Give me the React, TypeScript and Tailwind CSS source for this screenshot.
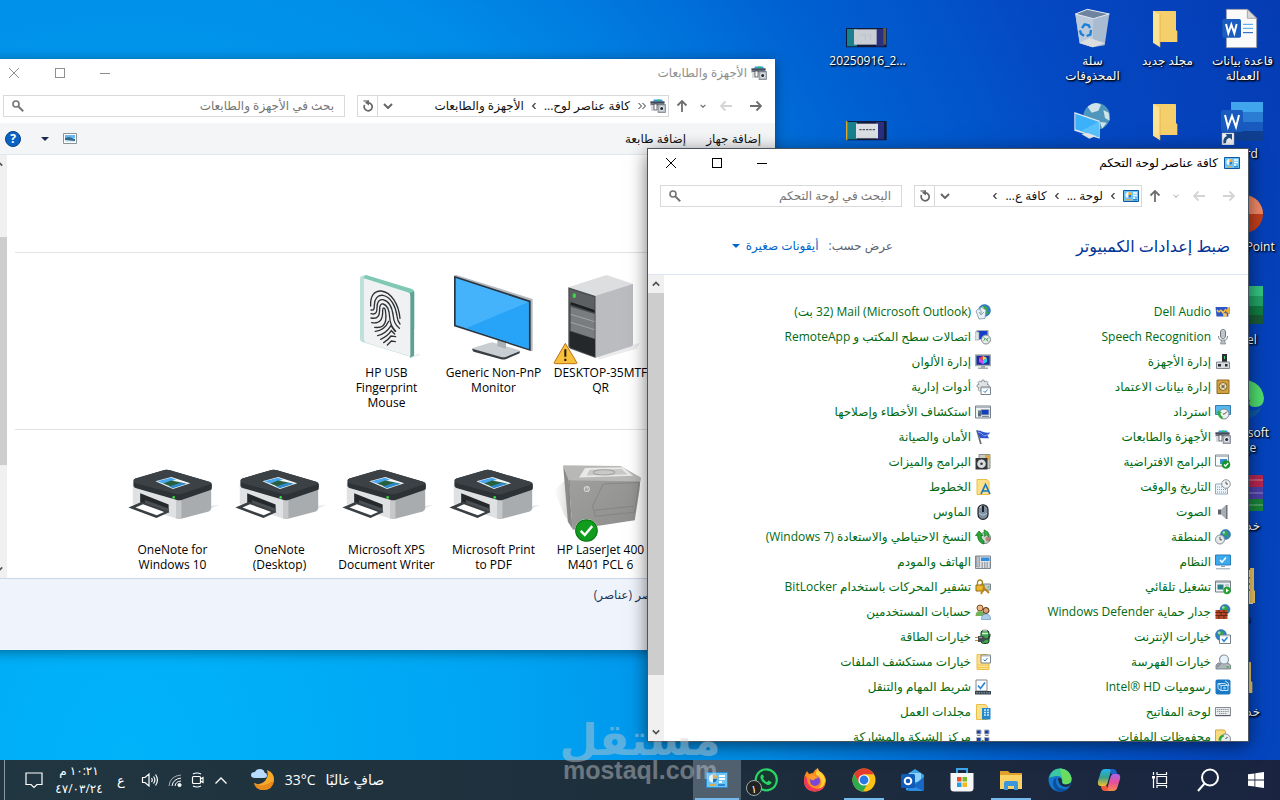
import type { ReactNode } from "react";

/* ---------- 16px item icons ---------- */

const Globe = ({ x = 8, y = 8, r = 5 }: { x?: number; y?: number; r?: number }) => (
  <g>
    <circle cx={x} cy={y} r={r} fill="#2f7fc4" stroke="#1f5c9c" strokeWidth=".5" />
    <path d={`M${x - r * 0.6} ${y - r * 0.5}q${r * 0.6} ${-r * 0.5} ${r} 0t${-r * 0.3} ${r * 0.7}t${-r * 0.7} ${-r * 0.7}`} fill="#35a845" />
    <path d={`M${x + r * 0.2} ${y + r * 0.2}h${r * 0.6}l${-r * 0.4} ${r * 0.6}z`} fill="#35a845" />
    <circle cx={x - r * 0.35} cy={y - r * 0.4} r={r * 0.25} fill="#d8efff" opacity=".7" />
  </g>
);

const small: Record<string, ReactNode> = {
  panel: (
    <>
      <path d="M.5 2.500h15v11H.5z" fill="#6cc5f4" stroke="#0c56a8" />
      <circle cx="5.500" cy="7" r="3" fill="#eaf7ff" />
      <path d="M5.500 7V4a3 3 0 0 1 3 3z" fill="#f7a31b" />
      <path d="M5.500 7H8.500A3 3 0 0 1 5.500 10z" fill="#2b7fd0" />
      <path d="M10 5h4M10 7.500h4M10 10h2" stroke="#fff" strokeWidth="1.300" />
      <path d="M3 11.800h5" stroke="#f7a31b" />
      <path d="M10 11.800h4" stroke="#1a6cb8" />
    </>
  ),
  devices: (
    <>
      <path d="M4 1.500h8l1 2H3z" fill="#2d9be8" />
      <path d="M7 1.500h2.500v2H7z" fill="#22c55e" />
      <path d="M.5 3.500h14v4H.5z" fill="#6b7280" />
      <path d="M.5 3.500h14v1.300H.5z" fill="#374151" />
      <path d="M1 7h3v6H1z" fill="#d7dade" />
      <path d="M4 6h3v6H4z" fill="#fff" stroke="#333" strokeWidth=".7" />
      <path d="M8 6.500h7.500v8H8z" fill="#b9bdc2" stroke="#6b7280" strokeWidth=".7" />
      <circle cx="11.700" cy="10.500" r="2.500" fill="#e5e7eb" />
      <circle cx="11.700" cy="10.500" r="1.500" fill="#1f2937" />
    </>
  ),
  audio: (
    <>
      <path d="M.5 3h12l1 9.500H1.500z" fill="#2e55c5" />
      <path d="M2 6q2 3 3 1t3 2l3-4" stroke="#f0c24b" strokeWidth="1.600" fill="none" />
      <path d="M11 6l3.500-3v7l-3.500-2z" fill="#f2b63c" stroke="#b97a17" strokeWidth=".5" />
      <circle cx="10" cy="11" r="2" fill="#f2c860" />
    </>
  ),
  mic: (
    <>
      <rect x="5.500" y=".5" width="5" height="9" rx="2.500" fill="#e2e5e9" stroke="#6f7780" />
      <path d="M6 3h4M6 5h4M6 7h4" stroke="#8b939c" strokeWidth=".8" />
      <path d="M3.500 7q0 4.500 4.500 4.500T12.500 7" fill="none" stroke="#7a828b" />
      <path d="M6.500 11h3l1 4h-5z" fill="#b6bcc3" stroke="#6f7780" strokeWidth=".6" />
    </>
  ),
  device: (
    <>
      <path d="M7 0h5v8H7z" fill="#2c3036" />
      <path d="M9 2h1v3H9z" fill="#46d160" />
      <path d="M1.500 8h13v6.500h-13z" fill="#d7dade" stroke="#83898f" />
      <path d="M3 10h3v2.500H3zM10 10h2.500v2.500H10z" fill="#2c3036" />
    </>
  ),
  vault: (
    <>
      <path d="M2 1h12v13.500H2z" fill="#d3a240" stroke="#8e6a1e" />
      <circle cx="8" cy="7.500" r="4" fill="#efe0b4" stroke="#846832" />
      <circle cx="8" cy="7.500" r="1.500" fill="#6b7077" />
      <path d="M5 4.500l6 6m0-6l-6 6" stroke="#846832" strokeWidth=".7" />
    </>
  ),
  recovery: (
    <>
      <path d="M.5 1.500h15v9H.5z" fill="#55b6ee" stroke="#347fae" />
      <circle cx="9" cy="10" r="5" fill="#eef1f2" stroke="#7d868c" />
      <path d="M1 9l3-2.500L7 9H5.500a4 4 0 0 0 2.500 4l-1 2A6 6 0 0 1 3 9z" fill="#2fab3b" />
      <path d="M9.500 10l2.500-2.500M9.500 10H8" stroke="#333" strokeWidth=".9" />
    </>
  ),
  defaults: (
    <>
      <path d="M.5 1h13v11H.5z" fill="#f8fafc" stroke="#7e8892" />
      <path d="M1 1.500h12v1.500H1z" fill="#b6bec6" />
      <path d="M5 5h7v5H5z" fill="#3a8fd8" />
      <circle cx="11" cy="10.500" r="4.300" fill="#14952b" />
      <path d="M9 10.500l1.500 1.700 2.700-3.200" stroke="#fff" strokeWidth="1.400" fill="none" />
    </>
  ),
  date: (
    <>
      <path d="M.5 5h12v10H.5z" fill="#eef6fc" stroke="#93a7b7" />
      <path d="M2 8h8M2 10.500h9M2 13h9" stroke="#5ba0da" strokeWidth="1.200" strokeDasharray="1 1" />
      <circle cx="11" cy="5" r="4.300" fill="#f1f3f4" stroke="#8b949c" />
      <path d="M11 2.500V5h2" stroke="#444" fill="none" strokeWidth=".9" />
    </>
  ),
  sound: (
    <>
      <path d="M3 5.500h3v5H3z" fill="#5b6168" />
      <path d="M6 5.500L11 1v14l-5-4.500z" fill="#a8adb3" />
      <path d="M11 1h1.500v14H11z" fill="#6d7379" />
    </>
  ),
  region: (
    <>
      <Globe x={10.5} y={5.5} r={5} />
      <circle cx="5" cy="10.500" r="4.500" fill="#e6e9ec" stroke="#858e96" />
      <path d="M5 7.800v3h2" stroke="#444" fill="none" strokeWidth=".9" />
    </>
  ),
  system: (
    <>
      <path d="M.5 1h15v10H.5z" fill="#3aa9ee" stroke="#2a7fb8" />
      <path d="M5 6l2 2.200L11 3.500" stroke="#fff" strokeWidth="1.500" fill="none" />
      <path d="M6 12.500h4M1 14.800h14" stroke="#8aa0b0" />
    </>
  ),
  autoplay: (
    <>
      <path d="M.5 2h15v11H.5z" fill="#eef1f3" stroke="#747e87" />
      <path d="M1 3h14" stroke="#9aa4ad" strokeWidth="1.500" />
      <path d="M2.500 5.500h6v5h-6z" fill="#2c7f86" />
      <path d="M10 6h4M10 8h4" stroke="#9aa4ad" />
      <circle cx="12" cy="11.500" r="3.700" fill="#22a52c" />
      <path d="M11 9.500l3 2-3 2z" fill="#fff" />
    </>
  ),
  firewall: (
    <>
      <Globe x={10} y={5.5} r={5} />
      <path d="M.5 6h12v9H.5z" fill="#b4492a" />
      <path d="M.5 8.500h12M.5 11.500h12M4 6v2.500M9 6v2.500M6 8.500v3M11 8.500v3M4 11.500V15M9 11.500V15" stroke="#5c1f10" strokeWidth=".8" />
    </>
  ),
  internet: (
    <>
      <Globe x={6} y={6} r={5.5} />
      <path d="M4.500 6h11v8.500h-11z" fill="#fff" stroke="#77818a" />
      <path d="M5 6.800h10" stroke="#b0b8bf" />
      <path d="M7 10l2 2.300 3.500-4" stroke="#2684d8" strokeWidth="1.500" fill="none" />
    </>
  ),
  indexing: (
    <>
      <path d="M1 11l2-2h10l2.500 2v4H1z" fill="#aeb4ba" stroke="#6f777e" strokeWidth=".8" />
      <path d="M11.500 13h2.500" stroke="#29a839" strokeWidth="1.200" />
      <circle cx="9" cy="5.500" r="4.500" fill="#e7f3fb" stroke="#8b949c" strokeWidth="1.200" />
      <path d="M6 9l-4 4" stroke="#8b949c" strokeWidth="2" />
    </>
  ),
  intel: (
    <>
      <rect x=".5" y=".5" width="15" height="15" rx="2" fill="#1b78c4" />
      <path d="M3 4.500h7l3 2v5H6l-3-2zM3 4.500l3 2v5M6 6.500h7" stroke="#bfe3fb" fill="none" />
      <circle cx="9.500" cy="9" r="1.500" fill="#7ac6f4" />
      <path d="M10 2q4 1 4 5" stroke="#fff" strokeWidth=".8" fill="none" />
    </>
  ),
  keyboard: (
    <>
      <path d="M.5 3.500h15v8H.5z" fill="#e9ebed" stroke="#858c93" />
      <path d="M2 5.500h12M2 7.500h12M4 9.500h8" stroke="#8b9299" strokeDasharray="1.200 .7" />
      <path d="M.5 11.700h15" stroke="#4d5359" />
    </>
  ),
  history: (
    <>
      <path d="M.5 1h9l1 1.500V15H.5z" fill="#fbdc7c" stroke="#d4a93a" />
      <circle cx="10.500" cy="10" r="5" fill="#e9eced" stroke="#858e96" />
      <path d="M3.500 11.500a6 6 0 0 1 5-6l.7 2A4.500 4.500 0 0 0 6 11.500z" fill="#2fab3b" />
      <path d="M10.500 10l2-2" stroke="#333" />
    </>
  ),
  mail: (
    <>
      <Globe x={9.5} y={6.5} r={6} />
      <path d="M1 7l5-4 5 3-1 8.500-6 .5z" fill="#e9f1f6" stroke="#7b94a6" strokeWidth=".8" />
      <path d="M6 6v5M4 8l2 3 3-3" stroke="#8aa3b5" fill="none" />
      <path d="M4 5h2" stroke="#3c78b8" />
    </>
  ),
  remote: (
    <>
      <path d="M2 1.500h11v9H2z" fill="#1440c8" stroke="#a9b0b7" strokeWidth="1.200" />
      <path d="M0 3h4v8H0z" fill="#dfe3e7" stroke="#8b939b" strokeWidth=".6" />
      <circle cx="11" cy="10.500" r="4.500" fill="#e9eced" stroke="#80888f" />
      <path d="M8.500 11.500l2-1.500-1.500-1.500M13.500 9l-2 1.500 1.500 2" stroke="#21962f" fill="none" />
    </>
  ),
  color: (
    <>
      <path d="M.8 1h14.500v10.500H.8z" fill="#1930a0" stroke="#a3a9af" strokeWidth="1.300" />
      <path d="M8 2l4 2-4 2.500z" fill="#fde047" />
      <path d="M8 2L4 4l4 2.500z" fill="#ef4444" />
      <path d="M4 4v4l4 2V6.500z" fill="#d946ef" />
      <path d="M12 4v4l-4 2V6.500z" fill="#22d3ee" />
      <path d="M6 12h4v1.500h3V15H3v-1.500h3z" fill="#a3a9af" />
    </>
  ),
  admin: (
    <>
      <path d="M7 1h2l.5 2 2-1 1.500 1.500-1 1.800 2 .7v2l-2 .6 1 2-1.500 1.400-2-1L9 13H7l-.5-2-2 1L3 10.600l1-2L2 8V6l2-.7-1-1.800L4.500 2l2 1z" fill="#e0e3e6" stroke="#858c93" strokeWidth=".8" />
      <path d="M6 8h9.500v7.500H6z" fill="#fff" stroke="#77818a" />
      <path d="M6 8.800h9.500" stroke="#9da5ad" />
      <path d="M8.500 12l1.500 1.500 2.500-3" stroke="#2684d8" fill="none" />
    </>
  ),
  trouble: (
    <>
      <path d="M.5 2h15v12H.5z" fill="#eef1f3" stroke="#77818a" />
      <path d="M1 3.200h14" stroke="#aab2ba" strokeWidth="1.500" />
      <path d="M6 5.500h8v5.500H6z" fill="#123fbc" stroke="#a9b0b7" />
      <path d="M3 6.500h3v6H3z" fill="#5b6a78" />
      <path d="M7 12.500h7" stroke="#7b858e" />
      <path d="M3.500 8h1.500" stroke="#45d35c" />
    </>
  ),
  flag: (
    <>
      <path d="M1 1l4 14h1.800L3 2z" fill="#6a7077" />
      <path d="M1.500 1.500q3.500-.5 5.500 1T15.500 3.500l-3 2.800 1.500 3Q9 9.500 5 9z" fill="#2f56cd" />
      <path d="M3 3q4 1 5 3t6-1" stroke="#8ba7f2" fill="none" />
    </>
  ),
  programs: (
    <>
      <path d="M4 .5h11v14H4z" fill="#c8cdbf" stroke="#8d9388" />
      <path d="M10 1h5v5h-5z" fill="#e0a94a" />
      <path d="M.5 4h12v11.500H.5z" fill="#33373b" />
      <circle cx="6.500" cy="9.700" r="4.300" fill="#d9dde0" />
      <circle cx="6.500" cy="9.700" r="1.300" fill="#33373b" />
    </>
  ),
  fonts: (
    <>
      <path d="M2 .5h10l2 2v13H2z" fill="#fce08a" stroke="#e8bf48" />
      <path d="M6 15l4.500-9.500L15 15M8 12h5" fill="none" stroke="#1b78c4" strokeWidth="1.700" />
    </>
  ),
  mouse: (
    <>
      <rect x="3" y=".8" width="10" height="14.500" rx="4.800" fill="#7d8ea0" stroke="#22272c" strokeWidth="1.200" />
      <path d="M8 2v6" stroke="#1d2227" strokeWidth="2" />
      <path d="M5 4q0-2 1.500-2" stroke="#d5dde4" fill="none" />
      <path d="M4 9q4 4 8 0" stroke="#b9c6d2" fill="none" />
    </>
  ),
  backup: (
    <>
      <circle cx="10" cy="9" r="5.500" fill="#cfd4d8" stroke="#7b848c" />
      <circle cx="13" cy="10" r="2.500" fill="#a0522d" opacity=".6" />
      <path d="M4 2l4 4.500H6q0 4 3 5.500v3q-6-1-6.500-8.500H.5z" fill="#27a835" stroke="#0e6c19" strokeWidth=".7" />
      <path d="M9 .8l4 2.200 1 5-2.500-2-2 1.500z" fill="#2fb53d" stroke="#0e6c19" strokeWidth=".6" />
    </>
  ),
  phone: (
    <>
      <path d="M.5 2h15v12.500H.5z" fill="#dfe3e6" stroke="#7e868e" />
      <path d="M1.500 2.500h3V13h-3z" fill="#b9c0c6" stroke="#7e868e" strokeWidth=".6" />
      <path d="M6 3.500h8.500V7H6z" fill="#2f8fdc" />
      <path d="M6.500 9h8M6.500 11h8M6.500 13h8" stroke="#646c74" strokeDasharray="1.500 1" />
    </>
  ),
  bitlocker: (
    <>
      <path d="M6 5h9.500v6H6z" fill="#c9ced2" stroke="#7b848c" />
      <path d="M1 6h8v6H1z" fill="#ecb82e" stroke="#96690c" />
      <path d="M2.500 6V4q0-3 2.500-3t2.500 3v2" stroke="#a8841f" strokeWidth="1.300" fill="none" />
      <path d="M8 8l6 6M9 9l-3 6" stroke="#b9851b" strokeWidth="1.800" />
      <path d="M12.500 8h2" stroke="#29a839" />
    </>
  ),
  users: (
    <>
      <circle cx="5" cy="4" r="3" fill="#e8b98a" stroke="#8b4a1a" />
      <path d="M.5 12q0-5 4.500-5t5 5z" fill="#74b05a" />
      <circle cx="11" cy="6.500" r="3" fill="#dba377" stroke="#4b2a15" />
      <path d="M6.500 15.500q0-5.500 4.500-5.500t4.700 5.500z" fill="#a9cdea" stroke="#5f87a8" strokeWidth=".6" />
    </>
  ),
  power: (
    <>
      <rect x="6" y="1.500" width="8" height="13" rx="2.500" fill="#3aa84a" stroke="#1d3a22" />
      <path d="M8 .5h4v2H8z" fill="#aab2b8" />
      <path d="M7 4.500h6" stroke="#d5f5da" strokeWidth="1.500" />
      <path d="M3 7h4q3 0 3 3t-3 3H3z" fill="#454c52" />
      <path d="M0 8.500h3M0 11.500h3" stroke="#c98b2c" strokeWidth="1.200" />
      <path d="M10 10q5 1 5-5" stroke="#30363b" fill="none" strokeWidth="1.300" />
      <path d="M4 8.500h3" stroke="#9fa7ad" />
    </>
  ),
  explorer: (
    <>
      <path d="M2 .5h10l2 2v13H2z" fill="#fce08a" stroke="#e8bf48" />
      <path d="M6 1h9.500v8H6z" fill="#fff" stroke="#77818a" />
      <path d="M6 2h9.500" stroke="#b0b8bf" />
      <path d="M8.500 5.500L10 7l2.500-3" stroke="#2684d8" fill="none" />
      <path d="M2 11h12M2 13.500h12" stroke="#e8bf48" strokeWidth=".7" />
    </>
  ),
  taskbar: (
    <>
      <path d="M1 1h11v11H1z" fill="#fff" stroke="#7e868e" />
      <path d="M3 6.500L5.500 9.500 10 3.500" stroke="#2684d8" strokeWidth="1.700" fill="none" />
      <path d="M0 12h16v3.500H0z" fill="#34424e" />
      <path d="M1 13.800h14" stroke="#8fa3b3" strokeDasharray="1.500 1" />
    </>
  ),
  work: (
    <>
      <path d="M1.500.5h9l2 2v13h-11z" fill="#fce08a" stroke="#e8bf48" />
      <path d="M7 4h8.500v11.500H7z" fill="#2687c9" />
      <path d="M9 6h2M12 6h2M9 8.500h2M12 8.500h2M9 11h2M12 11h2" stroke="#d3ecfb" strokeWidth="1.400" />
    </>
  ),
  network: (
    <>
      <path d="M1.500 1h4.500v4H1.500zM9.500 1H14v4H9.500zM1.500 8.500h4.500v4H1.500zM9.500 8.500H14v4H9.500z" fill="#1c3fae" stroke="#a9b0b7" />
      <path d="M2 6.500h3.500M10 6.500h3.500M2 14h3.500M10 14h3.500" stroke="#7e868e" />
      <path d="M7.700 11v5" stroke="#29a839" strokeWidth="1.500" />
    </>
  ),
};

const Small = ({ name }: { name: string }) => (
  <svg viewBox="0 0 16 16" className="size-4 shrink-0" aria-hidden="true">
    {small[name]}
  </svg>
);

/* ---------- device pictures ---------- */

const PrinterArt = () => (
  <svg viewBox="15 -12 284 284" className="size-24 overflow-visible" aria-hidden="true">
    <path d="M250 168l45-6-50 20-75 20z" fill="#e4e6e8" />
    <path d="M38 96l133 52v55q-6 0-12-3L38 160z" fill="#dfe1e3" />
    <path d="M171 148l99-35v58q0 8-7 11l-82 21q-5 1-10 0z" fill="#a9acaf" />
    <path d="M166 140h16v63h-16z" fill="#c6c8ca" />
    <path d="M60 128l84 33v24l-84-24z" fill="#25292c" />
    <path d="M74 148l70 25v10l-70-20z" fill="#4a4f54" />
    <path d="M25 170l40-17 82 30-39 18z" fill="#3a3f43" />
    <path d="M46 170l22-10 63 23-22 10z" fill="#fff" />
    <path d="M40 90q0-4 6-6l86-25q8-2 16 1l116 34q8 3 8 7v12q0 4-6 6l-82 28q-9 3-18 0L46 112q-6-2-6-7z" fill="#2d3236" />
    <path d="M46 84l86-25q8-2 16 1l116 34q8 3 2 8l-84 28q-8 2-16 0L46 98q-10-8 0-14z" fill="#3b4145" />
    <path d="M105 92l47-12 56 18-51 17z" fill="#f2f7fa" />
    <path d="M110 92l41-10 15 6-38 11z" fill="#48a7ef" />
    <path d="M128 99l23-9 20 4 24 5-38 12z" fill="#285f3e" />
    <path d="M145 108l34-11 19 3-41 13z" fill="#3089c8" />
    <circle cx="159" cy="140" r="4" fill="#35dc44" />
  </svg>
);

const LaserArt = () => (
  <svg viewBox="1281 -12 284 284" className="size-24 overflow-visible" aria-hidden="true">
    <defs>
      <linearGradient id="laserFront" x1="0" y1="0" x2="1" y2="1">
        <stop offset="0" stopColor="#a0a19f" />
        <stop offset="1" stopColor="#8d8e8c" />
      </linearGradient>
      <linearGradient id="laserShade" x1="0" y1="0" x2="1" y2="0">
        <stop offset="0" stopColor="#fff" />
        <stop offset="1" stopColor="#cfcfce" />
      </linearGradient>
    </defs>
    <path d="M1315 90l-30 30 28 70 30 45z" fill="url(#laserShade)" />
    <path d="M1311 46l16 38 12 150-14-22z" fill="#8b8c8a" />
    <path d="M1326 78l214 4-3 34-14 92-184 28z" fill="url(#laserFront)" />
    <path d="M1311 45l170 2 60 34-2 12-212-4z" fill="#b8b9b7" />
    <path d="M1376 53l112-2 30 25-160 5z" fill="#e9e9e8" />
    <path d="M1390 58l94-2 18 16-122 3z" fill="#c9cac8" />
    <ellipse cx="1432" cy="66" rx="32" ry="8" fill="none" stroke="#a2a3a1" strokeWidth="3" />
    <path d="M1430 100l106-4-14 88-116 12-8-30z" fill="none" stroke="#7c7d7b" strokeWidth="2" />
    <path d="M1404 178l116-12M1329 88v120" stroke="#7c7d7b" strokeWidth="2" />
    <circle cx="1381" cy="115" r="9" fill="#dcdddc" />
    <path d="M1379 108l-3 13m6-10l-2 10m-3-5h5m1 5l4-10" stroke="#8b8c8a" strokeWidth="2" />
    <circle cx="1380" cy="238" r="34" fill="#fff" />
    <circle cx="1380" cy="238" r="32" fill="#109c1c" stroke="#0a7513" strokeWidth="3" />
    <path d="M1363 239l12 12 22-26" stroke="#fff" strokeWidth="7" fill="none" />
  </svg>
);

const ComputerArt = () => (
  <svg viewBox="639 27 288 288" className="size-24 overflow-visible" aria-hidden="true">
    <path d="M770 290l130-42-10 18-110 32z" fill="#ececec" />
    <path d="M685 82l112-36q5-1 10 1l70 24-108 37z" fill="#dcdee0" />
    <path d="M767 107l112-36v182q0 4-4 6l-108 34z" fill="#babcbf" />
    <path d="M685 82l82 26v186l-76-28q-6-3-6-9z" fill="#4a4d50" />
    <path d="M689 88l74 24v42l-74-26z" fill="#5d6063" />
    <path d="M692 126l72 24v8l-72-24z" fill="#1d2023" />
    <path d="M692 140l72 22v74l-72-24z" fill="#7a7d80" />
    <path d="M692 163l72 22M692 187l72 22" stroke="#b5b8bb" strokeWidth="2" />
    <path d="M689 214l76 24v52l-72-27q-4-2-4-6z" fill="#25282b" />
    <ellipse cx="703" cy="107" rx="5" ry="7" fill="#35dc44" />
    <path d="M676 250l34 57q2 4-3 4h-61q-5 0-3-4z" fill="#f9c13a" stroke="#b9711a" strokeWidth="3" strokeLinejoin="round" />
    <path d="M676 268v22M676 296v7" stroke="#20160a" strokeWidth="6" />
  </svg>
);

const MonitorArt = () => (
  <svg viewBox="318 27 288 288" className="size-24 overflow-visible" aria-hidden="true">
    <path d="M398 264l52-16q6-2 12 0l74 22q8 3 2 8l-38 16q-8 3-16 1l-82-22q-8-4-4-9z" fill="#c9ced3" />
    <path d="M397 266l86 25q8 2 16-1l40-16v6l-40 17q-8 3-16 1l-82-23q-5-3-4-9z" fill="#3a3f44" />
    <path d="M472 232l26 8v26l-26-8z" fill="#aab0b6" />
    <path d="M343 46l6-1 229 72v156l-8-1z" fill="#b5bac0" />
    <path d="M342 47l230 75v151L342 199z" fill="#2a3540" />
    <path d="M347 54l219 72v140L347 195z" fill="#45b3fb" />
    <path d="M566 126v140l-188-61z" fill="#27a3f7" />
  </svg>
);

const FingerprintArt = () => (
  <svg viewBox="-3 27 288 288" className="size-24 overflow-visible" aria-hidden="true">
    <path d="M205 294l30-14 6 6-26 8z" fill="#eee" />
    <path d="M60 54q0-5 7-7l10-2 138 42q8 3 8 10v189l-10 5-146-45q-7-3-7-10z" fill="#bfe0d8" />
    <path d="M77 45l138 42q8 3 8 10v110l-10 5V102L70 54z" fill="#7fc8b4" />
    <path d="M210 100l12-6v193l-12 6z" fill="#5f9f96" />
    <path d="M72 60q0-5 6-3l125 40q8 3 8 10v182L79 248q-7-3-7-10z" fill="#f0f1f2" />
    <g fill="none" stroke="#2e3134" strokeWidth="4" strokeLinecap="round">
      <path d="M92 138C90 106 104 92 124 93c30 4 52 40 56 82" />
      <path d="M93 150c10 2 10-6 10-14 0-20 10-32 26-30 24 5 38 32 42 62 1 12 4 18 9 24" />
      <path d="M93 161c16 4 18-6 18-18 0-16 6-26 18-24 18 4 28 26 31 50 1 18 8 28 18 36" />
      <path d="M93 174c22 4 26-8 26-28 0-10 4-16 11-14 13 4 18 22 19 40 1 20 8 32 18 42" />
      <path d="M95 188c26 4 34-10 33-38 0-8 6-8 8 0 4 24 0 42-8 48-6 5-14 5-24 4" />
      <path d="M106 214c20-2 32-12 40-30" />
      <path d="M113 227c18-4 30-14 40-30l12 16" />
      <path d="M122 238c14-6 24-14 32-26l10 10" />
      <path d="M131 248c10-6 16-12 22-20l14 2" />
      <path d="M142 255l12-12 12 2" />
    </g>
  </svg>
);

/* ---------- desktop pictures ---------- */

const Shortcut = () => (
  <>
    <path d="M3 36h12v12H3z" fill="#f4f4f4" stroke="#9aa" strokeWidth=".5" />
    <path d="M4.500 46.500q-1-6 3.500-7.500l-1.500-2h6.500v6l-2-2q-4 0-4 5z" fill="#1e4f86" />
  </>
);

const FolderArt = () => (
  <svg viewBox="972 12 144 144" className="size-12" aria-hidden="true">
    <path d="M999 33h67q2 0 2 2v55l4 4v32h-60z" fill="#f6cf6d" />
    <path d="M999 33l21 11v98l-21-14z" fill="#ffe394" />
    <path d="M1020 44v98" stroke="#d9a93f" strokeWidth="2" />
  </svg>
);

const desktopArt: Record<string, ReactNode> = {
  doc: (
    <svg viewBox="1200 12 144 144" className="size-12" aria-hidden="true">
      <path d="M1222 28h64l27 27v88h-91z" fill="#fafafa" stroke="#8a8a8a" strokeWidth="2" />
      <path d="M1285 28v27h28z" fill="#d8d8d8" stroke="#8a8a8a" strokeWidth="2" />
      <path d="M1272 73h30M1272 85h30" stroke="#41a5ee" strokeWidth="3" />
      <path d="M1272 98h30" stroke="#185abd" strokeWidth="3" />
      <rect x="1210" y="57" width="56" height="56" rx="5" fill="#1b5cbe" />
      <path d="M1221 72l7 28 9-26 9 26 7-28" stroke="#fff" strokeWidth="6" fill="none" />
    </svg>
  ),
  folder: <FolderArt />,
  recycle: (
    <svg viewBox="747 12 144 144" className="size-12" aria-hidden="true">
      <path d="M766 42l36-14 66 14-14 94-36 6-39-12z" fill="#a9bbd0" />
      <path d="M766 42l54 14-2 86-39-12z" fill="#bccbdc" />
      <path d="M766 42l36-14 66 14-48 14z" fill="#6d83a0" stroke="#e3eaf1" strokeWidth="3" />
      <path d="M779 128l30-14 46 16-37 12z" fill="#dcdedf" />
      <path d="M786 84l8-11 12 3 4 8M813 90l-2 14-11 4M792 107l-9-6-3-10" stroke="#1a7fd6" strokeWidth="7" fill="none" />
    </svg>
  ),
  network: (
    <svg viewBox="747 291 144 144" className="size-12" aria-hidden="true">
      <circle cx="830" cy="349" r="40" fill="#4f96bd" />
      <path d="M803 320q20-18 40-6l-8 18-20 6zM850 330l16 8 3 24-14-8zM840 366l20 2-14 18z" fill="#cfe3ea" />
      <path d="M763 336l76 26v54l-76-24z" fill="#dfe7ec" />
      <path d="M766 341l70 24v46l-70-23z" fill="#3cb0f8" />
      <path d="M836 365v46l-54-18z" fill="#58c0fb" />
      <path d="M784 402l22-2 22 8-20 8z" fill="#e5e7e9" />
    </svg>
  ),
  word: (
    <svg viewBox="0 0 48 48" className="size-12" aria-hidden="true">
      <path d="M12 5h32v10H12z" fill="#41a5ee" />
      <path d="M12 15h32v10H12z" fill="#2b7cd3" />
      <path d="M12 25h32v9H12z" fill="#185abd" />
      <path d="M12 34h32v10H12z" fill="#103f91" />
      <rect x="2" y="13" width="22" height="22" rx="2" fill="#185abd" />
      <path d="M6 18l3 12 4-11 4 11 3-12" stroke="#fff" strokeWidth="2" fill="none" />
      <Shortcut />
    </svg>
  ),
  powerpoint: (
    <svg viewBox="0 0 48 48" className="size-12" aria-hidden="true">
      <circle cx="25" cy="24" r="19" fill="#c43e1c" />
      <path d="M25 24V5a19 19 0 0 1 19 19z" fill="#f08a68" />
      <path d="M25 5v19H6A19 19 0 0 1 25 5z" fill="#ed6c47" />
    </svg>
  ),
  excel: (
    <svg viewBox="0 0 48 48" className="size-12" aria-hidden="true">
      <path d="M12 3h32v10H12z" fill="#33c481" />
      <path d="M12 13h32v10H12z" fill="#21a366" />
      <path d="M12 23h32v9H12z" fill="#107c41" />
      <path d="M12 32h32v9H12z" fill="#185c37" />
    </svg>
  ),
  edge: (
    <svg viewBox="0 0 48 48" className="size-12" aria-hidden="true">
      <path d="M24 43Q38 43 43 31q-8 6-19 2z" fill="#0c59a4" />
      <path d="M8 14Q20-2 36 7q8 5 9 15 0 9-9 9-8 0-5-7z" fill="#4fdc6e" />
    </svg>
  ),
  winrar: (
    <svg viewBox="0 0 48 48" className="size-12" aria-hidden="true">
      <path d="M8 6h36v12H8z" fill="#b5264f" />
      <path d="M8 18h36v12H8z" fill="#4a3fa8" />
      <path d="M8 30h36v12H8z" fill="#17843a" />
      <path d="M8 11h36M8 24h36M8 36h36" stroke="#fff" strokeWidth="1" opacity=".4" />
    </svg>
  ),
  files: (
    <svg viewBox="0 0 48 48" className="size-12" aria-hidden="true">
      <path d="M12 8h22v34H12z" fill="#eceff2" />
      <path d="M31 6h4v22l1 1v12h-5z" fill="#f2cb67" />
      <path d="M26 16h5M26 22h5M26 28h5" stroke="#4a90d9" strokeWidth="2" />
    </svg>
  ),
  photo: (
    <svg viewBox="72 12 144 144" className="size-12" aria-hidden="true">
      <path d="M78 84h122v58H78z" fill="#101a3c" />
      <path d="M81 87h30v52H81z" fill="#17818e" />
      <path d="M168 87h24v52h-24z" fill="#2a2f7e" />
      <path d="M102 88h68v46h-68z" fill="#c9cdd4" />
      <path d="M190 84h8v50h-8z" fill="#6b5a3a" />
      <path d="M122 104h14v16M142 104h10v16" stroke="#b9bec5" strokeWidth="2" fill="none" />
    </svg>
  ),
  photo2: (
    <svg viewBox="72 12 144 144" className="size-12" aria-hidden="true">
      <path d="M78 84h122v58H78z" fill="#101a3c" />
      <path d="M81 87h30v52H81z" fill="#17818e" />
      <path d="M168 87h24v52h-24z" fill="#2a2f7e" />
      <path d="M108 92h66v44h-66z" fill="#dcdfe3" />
      <path d="M118 110h50" stroke="#4b5563" strokeWidth="4" strokeDasharray="7 3" />
      <path d="M78 84h4v58h-4z" fill="#e0a92c" />
    </svg>
  ),
};

interface DesktopItem {
  art: string;
  label: string;
  col: string;
  row: string;
}

const desktopItems: DesktopItem[] = [
  { art: "doc", label: "قاعدة بيانات العمالة", col: "col-start-1", row: "row-start-1" },
  { art: "word", label: "Word", col: "col-start-1", row: "row-start-2" },
  { art: "powerpoint", label: "PowerPoint", col: "col-start-1", row: "row-start-3" },
  { art: "excel", label: "Excel", col: "col-start-1", row: "row-start-4" },
  { art: "edge", label: "Microsoft Edge", col: "col-start-1", row: "row-start-5" },
  { art: "winrar", label: "خدمات", col: "col-start-1", row: "row-start-6" },
  { art: "files", label: "2o", col: "col-start-1", row: "row-start-7" },
  { art: "folder", label: "خدمات", col: "col-start-1", row: "row-start-8" },
  { art: "folder", label: "مجلد جديد", col: "col-start-2", row: "row-start-1" },
  { art: "folder", label: "", col: "col-start-2", row: "row-start-2" },
  { art: "recycle", label: "سلة المحذوفات", col: "col-start-3", row: "row-start-1" },
  { art: "network", label: "", col: "col-start-3", row: "row-start-2" },
  { art: "photo", label: "20250916_2...", col: "col-start-6", row: "row-start-1" },
  { art: "photo2", label: "", col: "col-start-6", row: "row-start-2" },
];

/* ---------- window chrome ---------- */

const WindowButtons = () => (
  <div className="flex h-7" dir="ltr">
    <button aria-label="إغلاق" className="flex w-11.5 items-center justify-center">
      <svg viewBox="0 0 10 10" className="size-2.5" stroke="currentColor"><path d="M0 0l10 10M10 0L0 10" /></svg>
    </button>
    <button aria-label="تكبير" className="flex w-11.5 items-center justify-center">
      <span className="size-2.5 border border-current" />
    </button>
    <button aria-label="تصغير" className="flex w-11 items-center justify-center">
      <span className="h-px w-2.5 bg-current" />
    </button>
  </div>
);

const Arrow = ({ dir, tone }: { dir: "right" | "left" | "up"; tone: string }) => (
  <svg viewBox="0 0 12 12" className={`size-3 ${tone}`} fill="none" stroke="currentColor" strokeWidth="1.800" aria-hidden="true">
    {dir === "right" && <path d="M0 6h11M6.500 1.500L11 6l-4.500 4.500" />}
    {dir === "left" && <path d="M12 6H1M5.500 1.500L1 6l4.500 4.500" />}
    {dir === "up" && <path d="M6 12V1M1.500 5.500L6 1l4.500 4.500" />}
  </svg>
);

const Chevron = ({ className }: { className: string }) => (
  <svg viewBox="0 0 10 6" className={className} fill="none" stroke="currentColor" strokeWidth="2" aria-hidden="true">
    <path d="M1 1l4 4 4-4" />
  </svg>
);

const Crumb = () => (
  <svg viewBox="0 0 4 6" className="h-1.5 w-1 shrink-0" fill="none" stroke="#444" strokeWidth="1.200" aria-hidden="true">
    <path d="M3.500 0L.7 3l2.800 3" />
  </svg>
);

interface AddressRowProps {
  icon: string;
  forward: string;
  history: string;
  searchId: string;
  placeholder: string;
  children: ReactNode;
  width: string;
}

const AddressRow = ({ icon, forward, history, searchId, placeholder, children, width }: AddressRowProps) => (
  <div className="mt-2 flex h-5.5 items-stretch ps-[11px] pe-3">
    <div className="flex items-center pe-[5px]">
      <button aria-label="السابق" className="flex w-4 justify-center"><Arrow dir="right" tone={forward} /></button>
      <button aria-label="التالي" className="ms-3.5 flex w-4 justify-center"><Arrow dir="left" tone="text-[#d4d4d4]" /></button>
      <button aria-label="المواقع الأخيرة" className="ms-[9px] flex w-3 justify-center"><Chevron className={`h-1 w-1.5 ${history}`} /></button>
      <button aria-label="أعلى" className="ms-[7px] flex w-4 justify-center"><Arrow dir="up" tone="text-[#6e6e6e]" /></button>
    </div>
    <div className={`me-3 flex border border-[#d9d9d9] bg-white ${width}`}>
      <div className="flex min-w-0 flex-1 items-center gap-2 overflow-hidden ps-0.5 whitespace-nowrap">
        <Small name={icon} />
        {children}
      </div>
      <button aria-label="المواقع السابقة" className="flex w-5 items-center justify-center text-[#666]"><Chevron className="h-1.5 w-2.5" /></button>
      <button aria-label="تحديث" className="flex w-5 items-center justify-center border-s border-[#d9d9d9] text-[#666]">
        <svg viewBox="0 0 12 12" className="size-3" fill="none" stroke="currentColor" strokeWidth="1.700">
          <path d="M6.500 2.800A4 4 0 1 1 2.600 5" />
          <path d="M7 0v5.600L3 2.800z" fill="currentColor" stroke="none" />
          <path d="M1.500 1h5" strokeWidth="1.200" />
        </svg>
      </button>
    </div>
    <label htmlFor={searchId} className="flex flex-1 items-center border border-[#d9d9d9] bg-white pe-2 ps-2.5">
      <input id={searchId} type="text" aria-label={placeholder} placeholder={placeholder} className="w-full min-w-0 flex-1 bg-transparent outline-none placeholder:text-[#757575]" />
      <svg viewBox="0 0 12 12" className="size-3 shrink-0" fill="none" stroke="#757575" aria-hidden="true">
        <circle cx="4" cy="4" r="3" strokeWidth="1.600" />
        <path d="M6.200 6.200l5 5" strokeWidth="2" />
      </svg>
    </label>
  </div>
);

const ScrollBar = ({ before, thumb }: { before: string; thumb: string }) => (
  <div className="flex w-4 shrink-0 flex-col items-center bg-[#f0f0f0] text-[#505050]">
    <span className="flex h-4.5 shrink-0 items-center"><Chevron className="h-1.5 w-2 rotate-180" /></span>
    <span className={`shrink-0 ${before}`} />
    <span className={`w-full shrink-0 bg-[#cdcdcd] ${thumb}`} />
    <span className="flex-1" />
    <span className="flex h-4.5 shrink-0 items-center"><Chevron className="h-1.5 w-2" /></span>
  </div>
);

/* ---------- devices and printers ---------- */

const deviceGroups: { label: string[]; art: ReactNode }[][] = [
  [
    { label: ["DESKTOP-35MTF", "QR"], art: <ComputerArt /> },
    { label: ["Generic Non-PnP", "Monitor"], art: <MonitorArt /> },
    { label: ["HP USB", "Fingerprint", "Mouse"], art: <FingerprintArt /> },
  ],
  [
    { label: ["HP LaserJet 400", "M401 PCL 6"], art: <LaserArt /> },
    { label: ["Microsoft Print", "to PDF"], art: <PrinterArt /> },
    { label: ["Microsoft XPS", "Document Writer"], art: <PrinterArt /> },
    { label: ["OneNote", "(Desktop)"], art: <PrinterArt /> },
    { label: ["OneNote for", "Windows 10"], art: <PrinterArt /> },
  ],
];

const DevicesWindow = () => (
  <section aria-label="الأجهزة والطابعات" className="absolute top-[59px] -left-[9px] flex h-[591px] w-[784px] flex-col overflow-hidden bg-white shadow-[0_2px_12px_rgba(0,0,0,0.4)]">
    <header className="flex items-start justify-between ps-2 text-[#8f8f8f]">
      <div className="flex h-7 items-center gap-1">
        <Small name="devices" />
        <h2>الأجهزة والطابعات</h2>
      </div>
      <WindowButtons />
    </header>
    <AddressRow icon="devices" forward="text-[#6e6e6e]" history="text-[#6e6e6e]" searchId="search-devices" placeholder="بحث في الأجهزة والطابعات" width="w-78">
      <svg viewBox="0 0 8 6" className="-ms-1 h-1.5 w-2 shrink-0" fill="none" stroke="#333" aria-hidden="true"><path d="M.5 0l3 3-3 3M4.500 0l3 3-3 3" /></svg>
      <span>كافة عناصر لوح...</span>
      <Crumb />
      <span>الأجهزة والطابعات</span>
    </AddressRow>
    <div className="mt-1.5 flex h-8 shrink-0 items-center border-b border-[#e3e6ea] bg-[#f4f5f7] ps-3.5 pe-3.5">
      <button>إضافة جهاز</button>
      <button className="ms-5">إضافة طابعة</button>
      <div className="ms-auto flex items-center">
        <button aria-label="طريقة العرض" className="flex">
          <svg viewBox="0 0 14 11" className="h-[11px] w-3.5">
            <path d="M.5.5h13v10H.5z" fill="#fff" stroke="#8b939b" />
            <path d="M2 2h10v3H2z" fill="#6cb7f2" />
            <path d="M2 5l4-1 6 2v3H2z" fill="#2f6a8f" />
            <path d="M2 7l10 1v1H2z" fill="#dbe9f2" />
          </svg>
        </button>
        <button aria-label="المزيد من الخيارات" className="ms-3.5 flex">
          <svg viewBox="0 0 8 4" className="h-1 w-2"><path d="M0 0h8L4 4z" fill="#1b2a52" /></svg>
        </button>
        <button aria-label="تعليمات" className="ms-5 flex size-4 items-center justify-center rounded-full border border-[#073f86] bg-[#0a62c4] text-[12px] font-bold text-white">
          <span dir="ltr">?</span>
        </button>
      </div>
    </div>
    <div className="flex min-h-0 flex-1">
      <div className="min-w-0 flex-1 overflow-hidden ps-1.5 pe-2 pt-[97px]">
        {deviceGroups.map((group, i) => (
          <ul key={i} className="flex h-[177px] border-t border-[#e2e2e2] ps-[115px] pt-4">
            {group.map((device) => (
              <li key={device.label.join(" ")} className="flex w-[107px] shrink-0 flex-col items-center text-center leading-[15px] text-black" dir="ltr">
                {device.art}
                {device.label.map((line) => (
                  <span key={line} className="whitespace-nowrap">{line}</span>
                ))}
              </li>
            ))}
          </ul>
        ))}
      </div>
      <ScrollBar before="h-16" thumb="h-[228px]" />
    </div>
    <footer className="h-[72px] shrink-0 border-t border-[#c9d6e8] bg-[#eff3fb] ps-28 pt-2 text-[#1e395b]">عنصر (عناصر)</footer>
  </section>
);

/* ---------- control panel ---------- */

const panelColumns: [string, string][][] = [
  [
    ["audio", "Dell Audio"],
    ["mic", "Speech Recognition"],
    ["device", "إدارة الأجهزة"],
    ["vault", "إدارة بيانات الاعتماد"],
    ["recovery", "استرداد"],
    ["devices", "الأجهزة والطابعات"],
    ["defaults", "البرامج الافتراضية"],
    ["date", "التاريخ والوقت"],
    ["sound", "الصوت"],
    ["region", "المنطقة"],
    ["system", "النظام"],
    ["autoplay", "تشغيل تلقائي"],
    ["firewall", "جدار حماية Windows Defender"],
    ["internet", "خيارات الإنترنت"],
    ["indexing", "خيارات الفهرسة"],
    ["intel", "رسوميات Intel® HD"],
    ["keyboard", "لوحة المفاتيح"],
    ["history", "محفوظات الملفات"],
  ],
  [
    ["mail", "Mail (Microsoft Outlook) (32 بت)"],
    ["remote", "اتصالات سطح المكتب و RemoteApp"],
    ["color", "إدارة الألوان"],
    ["admin", "أدوات إدارية"],
    ["trouble", "استكشاف الأخطاء وإصلاحها"],
    ["flag", "الأمان والصيانة"],
    ["programs", "البرامج والميزات"],
    ["fonts", "الخطوط"],
    ["mouse", "الماوس"],
    ["backup", "النسخ الاحتياطي والاستعادة (Windows 7)"],
    ["phone", "الهاتف والمودم"],
    ["bitlocker", "تشفير المحركات باستخدام BitLocker"],
    ["users", "حسابات المستخدمين"],
    ["power", "خيارات الطاقة"],
    ["explorer", "خيارات مستكشف الملفات"],
    ["taskbar", "شريط المهام والتنقل"],
    ["work", "مجلدات العمل"],
    ["network", "مركز الشبكة والمشاركة"],
  ],
];

const ControlPanelWindow = () => (
  <section aria-label="كافة عناصر لوحة التحكم" className="absolute top-[149px] left-[648px] flex h-[592px] w-[600px] flex-col bg-white shadow-[0_0_0_1px_#4b5560,0_4px_18px_rgba(0,0,0,0.6)]">
    <header className="flex items-start justify-between ps-2 text-black">
      <div className="flex h-7 items-center gap-1.5">
        <Small name="panel" />
        <h1>كافة عناصر لوحة التحكم</h1>
      </div>
      <WindowButtons />
    </header>
    <AddressRow icon="panel" forward="text-[#d4d4d4]" history="text-[#c4c4c4]" searchId="search-panel" placeholder="البحث في لوحة التحكم" width="w-57">
      <Crumb />
      <span>لوحة ...</span>
      <Crumb />
      <span>كافة ع...</span>
      <Crumb />
    </AddressRow>
    <div className="flex h-[68px] shrink-0 items-center border-b border-[#dbe4f2] ps-4.5 pt-2.5">
      <h2 className="w-[337px] text-[16px] text-[#003399]">ضبط إعدادات الكمبيوتر</h2>
      <span className="text-[#5a6472]">عرض حسب:</span>
      <button className="ms-2.5 flex items-center gap-1.5 text-[#0066cc]">
        أيقونات صغيرة
        <svg viewBox="0 0 8 4" className="h-1 w-2"><path d="M0 0h8L4 4z" fill="#0066cc" /></svg>
      </button>
    </div>
    <div className="flex min-h-0 flex-1">
      <div className="flex min-w-0 flex-1 overflow-hidden ps-[17px] pt-6">
        {panelColumns.map((column, i) => (
          <ul key={i} className="w-60 shrink-0">
            {column.map(([icon, label]) => (
              <li key={label} className="h-[25px]">
                <a href="#" className="flex h-[25px] items-center gap-1 whitespace-nowrap text-[#006a12]">
                  <Small name={icon} />
                  {label}
                </a>
              </li>
            ))}
          </ul>
        ))}
      </div>
      <ScrollBar before="h-0" thumb="h-[382px]" />
    </div>
  </section>
);

/* ---------- taskbar ---------- */

const taskIcons: { name: string; art: ReactNode; open?: boolean; active?: boolean }[] = [
  {
    name: "Copilot",
    art: (
      <>
        <defs>
          <linearGradient id="copilotA" x1="0" y1="0" x2="0" y2="1">
            <stop offset="0" stopColor="#1fb4f0" />
            <stop offset=".5" stopColor="#3a9f8a" />
            <stop offset="1" stopColor="#f6c22c" />
          </linearGradient>
          <linearGradient id="copilotB" x1="0" y1="0" x2="0" y2="1">
            <stop offset="0" stopColor="#a865e8" />
            <stop offset=".5" stopColor="#ea4f9a" />
            <stop offset="1" stopColor="#f58a4a" />
          </linearGradient>
        </defs>
        <path d="M13 1h3q3 0 3.700 3L20.500 7h-5q-1 0-2-3-.5-3-3.500-3z" fill="#1c62c8" />
        <path d="M11 23H8q-3 0-3.700-3L3.500 17h5q1 0 2 3 .5 3 3.500 3z" fill="#ef5a3c" />
        <path d="M8 1h3.500q3 0 2 3.500l-3 10.500q-.9 3-3.500 3H4q-4 0-3-5L3.500 5Q4.500 1 8 1z" fill="url(#copilotA)" />
        <path d="M16 23h-3.500q-3 0-2-3.500l3-10.500q.9-3 3.500-3h3q4 0 3 5l-2.500 8q-1 4-4.500 4z" fill="url(#copilotB)" />
      </>
    ),
  },
  {
    name: "Microsoft Edge",
    art: (
      <>
        <circle cx="12" cy="12" r="11.500" fill="#1478cf" />
        <path d="M1 10Q4 0 13 .6q9 .8 10.500 9.500.3 6.500-6 6.500-4.500-.6-3-4.500-1-5-6.500-4T1 10z" fill="#3bc8a0" />
        <path d="M12 .5q9 .6 11.500 9.500.3 6.500-6 6.500-4-.5-3-4.500z" fill="#6bdc5f" />
        <path d="M8 13q0 7 8 8 3 0 5-1.500Q18 24 12 23.500 5 22 5 15q0-4 4-6-1 1.500-1 4z" fill="#0c4f9e" />
        <path d="M10 11q1-3 4 1-1 4 3 4.500 3 .5 6-2-1 4-5 4.500-7 0-8-8z" fill="#1d2a42" />
      </>
    ),
  },
  {
    name: "مستكشف الملفات",
    open: true,
    art: (
      <>
        <path d="M1 3h8l2 2h12v16H1z" fill="#e0a02c" />
        <path d="M1 7h22v14H1z" fill="#fbd364" />
        <path d="M5 22v-7q0-2 2-2h10q2 0 2 2v7h-4v-4H9v4z" fill="#3b96dc" />
      </>
    ),
  },
  {
    name: "Microsoft Store",
    art: (
      <>
        <path d="M7 5V1h10v4" fill="none" stroke="#3ba4ec" strokeWidth="2" />
        <path d="M.5 5h23v15q0 3.500-3.500 3.500H4Q.5 23.500.5 20z" fill="#f5f6f8" />
        <path d="M7 9h4.500v4.500H7z" fill="#f04e2b" />
        <path d="M12.500 9H17v4.500h-4.500z" fill="#7db82b" />
        <path d="M7 14.500h4.500V19H7z" fill="#1ba1e6" />
        <path d="M12.500 14.500H17V19h-4.500z" fill="#f9b91c" />
      </>
    ),
  },
  {
    name: "Outlook",
    art: (
      <>
        <path d="M5 7l9-6 9 6v15H5z" fill="#3aa5ea" />
        <path d="M8 5h12v9H8z" fill="#8cd2fa" />
        <path d="M5 23l18-14v12q0 2-2 2z" fill="#1668c4" />
        <path d="M23 23H8l-3-8z" fill="#2b8ce0" />
        <rect y="6" width="14" height="14" rx="1.500" fill="#0f5bb8" />
        <circle cx="7" cy="13" r="3.300" fill="none" stroke="#fff" strokeWidth="2" />
      </>
    ),
  },
  {
    name: "Google Chrome",
    open: true,
    art: (
      <>
        <circle cx="12" cy="12" r="11.500" fill="#fbc116" />
        <path d="M2 6.200A11.500 11.500 0 0 1 22 6.200H12L7 15z" fill="#e33b2e" />
        <path d="M2 6.200A11.500 11.500 0 0 0 11 23.500l5.200-9L7 15z" fill="#2da94f" />
        <circle cx="12" cy="12" r="5.600" fill="#fff" />
        <circle cx="12" cy="12" r="4.400" fill="#2878e8" />
      </>
    ),
  },
  {
    name: "Firefox",
    art: (
      <>
        <path d="M1 12Q1 7 4 3l2 3q3-1 4-1 2-4 5-5 0 3 3 4 5 4 5 9-1 10-11 10.500Q1 23 1 12z" fill="#ff8a1e" />
        <path d="M15 0q0 3 3 4.500 4 3 4 9-2 8-9 8 7-3 5-10-1-3-5-5 0-4 2-6.500z" fill="#ffd43b" />
        <path d="M1 12q0 11 11 11.500 7-.5 10-6-5 4-10 3-8-2-8-10l-2-3z" fill="#f0385a" />
        <circle cx="12" cy="13" r="5" fill="#7a46d8" />
        <path d="M5 8q4-2 7 0 3 0 3 2-3 0-4 2-3 1-6-4z" fill="#ff9a2b" />
      </>
    ),
  },
  {
    name: "WhatsApp",
    art: (
      <>
        <path d="M1.500 22.500l1.600-5.600A10.500 10.500 0 1 1 7.200 21z" fill="#17382f" stroke="#29d366" strokeWidth="2.200" />
        <path d="M8 6.500q-2 1-1.500 3.500 1.500 5 7 7 2.500.5 4-2l-.2-1-2.800-1.400-1.500 1.600q-2.500-1-4-3.600l1-1.500-1.200-2.600z" fill="#29d366" />
      </>
    ),
  },
  {
    name: "لوحة التحكم",
    open: true,
    active: true,
    art: (
      <>
        <path d="M1.500 4.500h21v15h-21z" fill="#6cc5f4" stroke="#2b8ad0" />
        <circle cx="8" cy="10.500" r="4" fill="#eaf7ff" />
        <path d="M8 10.500v-4a4 4 0 0 1 4 4z" fill="#f7a31b" />
        <path d="M8 10.500h4a4 4 0 0 1-4 4z" fill="#1b72c4" />
        <path d="M14 8h6M14 11h6M14 14h3" stroke="#fff" strokeWidth="1.800" />
        <path d="M4 17h6" stroke="#f7a31b" strokeWidth="1.500" />
        <path d="M13 17h7" stroke="#1b72c4" strokeWidth="1.500" />
      </>
    ),
  },
];

const Taskbar = () => (
  <footer className="flex h-10 shrink-0 justify-between bg-linear-to-r from-[#203640] via-[#1e2f3c] to-[#1a2440] text-white">
    <div className="flex">
      <button aria-label="ابدأ" className="flex w-12 items-center justify-center">
        <svg viewBox="0 0 16 16" className="size-4" fill="#fff"><path d="M0 2.300l6.500-.9v6.200H0zM7.300 1.300L16 0v7.600H7.300zM0 8.400h6.500v6.200L0 13.700zM7.300 8.400H16V16l-8.700-1.300z" /></svg>
      </button>
      <button aria-label="بحث" className="flex w-12 items-center justify-center">
        <svg viewBox="0 0 24 24" className="size-6" fill="none" stroke="#fff" strokeWidth="2"><circle cx="14" cy="9.500" r="8" /><path d="M8.500 15.500L2 23" /></svg>
      </button>
      <button aria-label="عرض المهام" className="flex w-12 items-center justify-center">
        <svg viewBox="0 0 16 16" className="size-4" fill="none" stroke="#fff" strokeWidth="1.200"><path d="M5 0v2.500h9.500V0M5 16v-2.500h9.500V16M5 4.500h9.500v7H5zM1.500 0v3M1.500 6v10" /><path d="M0 4h3v2.500H0z" fill="#fff" stroke="none" /></svg>
      </button>
      <div className="ms-[3px] flex gap-px">
        {taskIcons.map((t) => (
          <button key={t.name} aria-label={t.name} className={`relative flex w-12 items-center justify-center ${t.active ? "bg-[#50606e]" : ""}`}>
            <svg viewBox="0 0 24 24" className="size-6">{t.art}</svg>
            {t.open && <span className={`absolute bottom-0 h-0.5 bg-[#76b9ed] ${t.active ? "inset-x-0.5" : "inset-x-1"}`} />}
            {t.name === "WhatsApp" && (
              <span className="absolute bottom-1 left-1 flex size-4 items-center justify-center rounded-full border border-[#9aa] bg-[#222] text-[11px] leading-none">١</span>
            )}
          </button>
        ))}
      </div>
    </div>
    <div className="flex items-center">
      <button className="flex items-center gap-2.5 text-[14px]">
        <span>صافٍ غالبًا</span>
        <span dir="ltr">33°C</span>
        <svg viewBox="0 0 24 24" className="size-6" aria-hidden="true">
          <path d="M16 2q8 3 7 11-2 9-11 9-7 0-9-7 6 3 11-2 4-5 2-11z" fill="#f7a929" />
          <path d="M23 12q-1 10-11 10-7 0-9-7 9 6 20-3z" fill="#e88a1c" />
          <path d="M4 10q-4 0-4-3t4-3q1-3 5-3 4 0 4.500 3.500Q16 5 16 7.500T13 10z" fill="#b8dbff" />
        </svg>
      </button>
      <button aria-label="إظهار الرموز المخفية" className="ms-6 flex w-3"><svg viewBox="0 0 12 7" className="h-[7px] w-3" fill="none" stroke="#fff" strokeWidth="1.300"><path d="M.5 6.500L6 1l5.500 5.500" /></svg></button>
      <button aria-label="اجتماع الآن" className="ms-2.5 flex"><svg viewBox="0 0 14 16" className="h-4 w-3.5" fill="none" stroke="#fff" strokeWidth="1.200"><rect x="1.500" y="4.500" width="8" height="7" rx="1" /><path d="M9.500 7l2.500-1.500v5L9.500 9M2 2q4-2 8 0M2 14q4 2 8 0" /></svg></button>
      <button aria-label="الشبكة" className="ms-2 flex"><svg viewBox="0 0 16 16" className="size-4" fill="none" stroke="#fff"><path d="M2 14Q3 4 14 3" opacity=".6" /><path d="M5 14q1-7 9-8M8 14q.5-4.500 6-5" /><circle cx="12.500" cy="13" r="1.600" fill="#fff" /></svg></button>
      <button aria-label="الصوت" className="ms-2 flex"><svg viewBox="0 0 18 16" className="h-4 w-4.5" fill="none" stroke="#fff" strokeWidth="1.200"><path d="M1.500 5.500h2.500l4-3.500v12l-4-3.500H1.500zM10.500 6q1.500 2 0 4M12.500 4.500q2.800 3.500 0 7M14.500 2.500q4 5.500 0 11" /></svg></button>
      <span className="ms-4 text-[13px]">ع</span>
      <time className="ms-2.5 w-14 text-center text-[12px] leading-[18px]">
        <span className="block">١٠:٢١ م</span>
        <span className="block">٤٧/٠٣/٢٤</span>
      </time>
      <button aria-label="الإشعارات" className="ms-2 flex"><svg viewBox="0 0 18 18" className="size-4.5" fill="none" stroke="#fff" strokeWidth="1.200"><path d="M1 2h16v11.500h-5L9 16.500l-3-3H1z" /></svg></button>
      <span className="ms-5 me-1 h-10 w-px bg-[#8a959c]" />
    </div>
  </footer>
);

export default function App() {
  return (
    <div dir="rtl" lang="ar" className="relative flex h-screen flex-col overflow-hidden font-['Open_Sans','DejaVu_Sans',sans-serif] text-[12px] leading-4 text-[#111]">
      <main dir="ltr" className="relative min-h-0 flex-1 bg-[radial-gradient(ellipse_100%_220%_at_10%_100%,#00b4fa_0%,#00a4f2_30%,#008ce8_50%,#0062d2_68%,#0448c2_84%,#053cb4_100%)]">
        <div dir="rtl" className="grid auto-cols-[75px] grid-rows-[repeat(8,93px)]">
          {desktopItems.map((item) => (
            <a key={item.col + item.row} href="#" aria-label={item.label || "مجلد"} className={`flex w-[75px] flex-col items-center pt-1 text-center leading-[15px] text-white [text-shadow:1px_1px_2px_#000,1px_1px_2px_#000] ${item.col} ${item.row}`}>
              {desktopArt[item.art]}
              <span dir="auto" className="mt-px">{item.label}</span>
            </a>
          ))}
        </div>
        <div dir="rtl"><DevicesWindow /></div>
        <div dir="rtl"><ControlPanelWindow /></div>
      </main>
      <Taskbar />
      <div className="pointer-events-none absolute top-[704px] left-[562px] flex w-[156px] flex-col items-center text-[#c8ccd0] opacity-45">
        <span className="text-[44px] leading-[68px] font-bold">مستقل</span>
        <span dir="ltr" className="-mt-3.5 font-['Liberation_Sans',sans-serif] text-[25px] leading-6 font-bold">mostaql.com</span>
      </div>
    </div>
  );
}
